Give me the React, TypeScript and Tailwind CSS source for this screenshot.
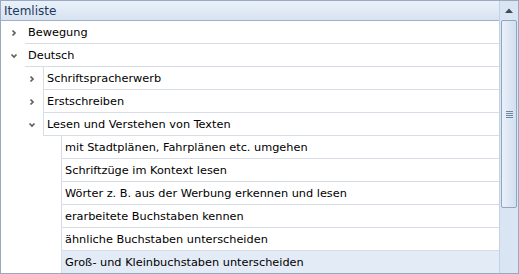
import React from 'react';

type Row = { label: string; level: number; state?: 'open' | 'closed'; selected?: boolean };

const rows: Row[] = [
  { label: 'Bewegung', level: 0, state: 'closed' },
  { label: 'Deutsch', level: 0, state: 'open' },
  { label: 'Schriftspracherwerb', level: 1, state: 'closed' },
  { label: 'Erstschreiben', level: 1, state: 'closed' },
  { label: 'Lesen und Verstehen von Texten', level: 1, state: 'open' },
  { label: 'mit Stadtplänen, Fahrplänen etc. umgehen', level: 2 },
  { label: 'Schriftzüge im Kontext lesen', level: 2 },
  { label: 'Wörter z. B. aus der Werbung erkennen und lesen', level: 2 },
  { label: 'erarbeitete Buchstaben kennen', level: 2 },
  { label: 'ähnliche Buchstaben unterscheiden', level: 2 },
  { label: 'Groß- und Kleinbuchstaben unterscheiden', level: 2, selected: true },
];

const Chevron = ({ open }: { open: boolean }) => (
  <svg width="8" height="8" viewBox="0 0 8 8" className="shrink-0">
    {open ? (
      <path d="M1.5 2.5 L4 5 L6.5 2.5" stroke="#5e5e5e" strokeWidth="1.7" fill="none" />
    ) : (
      <path d="M2.5 1.5 L5 4 L2.5 6.5" stroke="#5e5e5e" strokeWidth="1.7" fill="none" />
    )}
  </svg>
);

const TreeRow = ({ row }: { row: Row }) => {
  // each level shifts the cell by 18px
  const indent = [0, 18, 36][row.level];
  return (
    <div className="flex h-[23px]" style={{ paddingLeft: indent }}>
      <div className="w-[24px] flex items-center justify-center pl-[1px] pt-[1px]">
        {row.state && <Chevron open={row.state === 'open'} />}
      </div>
      <div
        className={`flex-1 flex items-center pl-[3px] pt-[2px] border-b border-[#d6dde6] ${
          row.level > 0 ? 'border-l' : ''
        } ${row.selected ? 'bg-[#e3ebf6]' : 'bg-white'}`}
      >
        <span className="text-[11.3px] text-black leading-none">{row.label}</span>
      </div>
    </div>
  );
};

export default function App() {
  return (
    <div className="w-[519px] h-[274px] bg-white font-['DejaVu_Sans',sans-serif] flex border border-[#9aa9bf] overflow-hidden">
      <div className="flex-1 flex flex-col min-w-0">
        <div className="h-[20px] flex items-center pl-[3px] pt-[1px] border-b border-[#9fb1c9] bg-gradient-to-b from-[#eaf1fa] to-[#d7e3f2]">
          <span className="text-[12px] text-[#1e395b]">Itemliste</span>
        </div>
        <div className="flex flex-col">
          {rows.map((r) => (
            <TreeRow key={r.label} row={r} />
          ))}
        </div>
      </div>
      {/* scrollbar */}
      <div className="w-[19px] flex flex-col bg-[#dae5f3] border-l border-[#c2d1e4]">
        <div className="h-[18px] flex items-center justify-center">
          <svg width="8" height="5" viewBox="0 0 8 5">
            <path d="M0 5 L4 0.5 L8 5 Z" fill="#3c4a5c" />
          </svg>
        </div>
        <div className="mx-[1px] mt-[1px] h-[188px] rounded-[2px] border border-[#93a6c0] bg-gradient-to-r from-[#e9f0f9] to-[#d3e0f0] flex items-center justify-center">
          <div className="flex flex-col gap-[1px]">
            <div className="w-[7px] h-[1px] bg-[#6f85a3]" />
            <div className="w-[7px] h-[1px] bg-[#6f85a3]" />
            <div className="w-[7px] h-[1px] bg-[#6f85a3]" />
            <div className="w-[7px] h-[1px] bg-[#6f85a3]" />
          </div>
        </div>
      </div>
    </div>
  );
}
